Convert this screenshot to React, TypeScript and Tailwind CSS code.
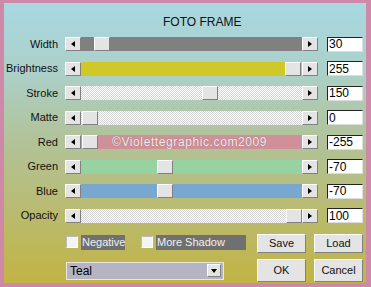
import React from "react";

type Row = {
  label: string;
  value: string;
  track: string;
  thumb: number | null;
  text?: string;
};

const dither =
  "bg-[repeating-conic-gradient(#ffffff_0_25%,#d4d4d4_0_50%)] bg-[length:2px_2px]";

const rows: Row[] = [
  { label: "Width", value: "30", track: "bg-[#808080]", thumb: 13 },
  { label: "Brightness", value: "255", track: "bg-[#d0c828]", thumb: 204 },
  { label: "Stroke", value: "150", track: dither, thumb: 121 },
  { label: "Matte", value: "0", track: dither, thumb: 1 },
  { label: "Red", value: "-255", track: "bg-[#d0909a]", thumb: 1, text: "©Violettegraphic.com2009" },
  { label: "Green", value: "-70", track: "bg-[#98d2a2]", thumb: 76 },
  { label: "Blue", value: "-70", track: "bg-[#78a8d0]", thumb: 76 },
  { label: "Opacity", value: "100", track: dither, thumb: 205 },
];

const bevel =
  "bg-[#e4e4e4] border border-t-white border-l-white border-r-[#808080] border-b-[#808080]";

function ArrowButton(props: { dir: "left" | "right" }) {
  return (
    <div className={`w-[16px] h-[14px] flex items-center justify-center ${bevel}`}>
      <div
        className={
          props.dir === "left"
            ? "w-0 h-0 border-y-[3px] border-y-transparent border-r-[4px] border-r-black"
            : "w-0 h-0 border-y-[3px] border-y-transparent border-l-[4px] border-l-black"
        }
      />
    </div>
  );
}

function SliderRow(props: { row: Row }) {
  const { row } = props;
  return (
    <div className="flex items-center h-[14px]">
      <div className="w-[54px] text-right text-[11px] leading-none text-[#111]">{row.label}</div>
      <div className="ml-[7px]">
        <ArrowButton dir="left" />
      </div>
      <div className={`relative w-[221px] h-[14px] ${row.track}`}>
        {row.text && (
          <div className="absolute left-[31px] top-0 h-[14px] flex items-center text-[12px] tracking-[0.6px] text-[#f6eef0] [text-shadow:0_0_1px_#8a5a60]">
            {row.text}
          </div>
        )}
        {row.thumb !== null && (
          <div
            className={`absolute top-0 w-[16px] h-[14px] ${bevel}`}
            style={{ left: row.thumb }}
          />
        )}
      </div>
      <ArrowButton dir="right" />
      <div className="ml-[9px] w-[36px] h-[15px] bg-white border border-t-[#222] border-l-[#222] border-r-[#ddd] border-b-[#ddd] text-[12px] leading-none pl-[1px] flex items-center text-black">
        {row.value}
      </div>
    </div>
  );
}

function Check(props: { label: string; width: number }) {
  return (
    <div className="flex items-center">
      <div className="w-[12px] h-[12px] bg-[#f4f4f0] border border-t-[#bbb] border-l-[#bbb] border-r-white border-b-white" />
      <div
        className="ml-[3px] h-[15px] bg-[#707070] text-[#f0f0f0] text-[11px] flex items-center pl-[1px]"
        style={{ width: props.width }}
      >
        {props.label}
      </div>
    </div>
  );
}

function Btn(props: { label: string; h: number }) {
  return (
    <div
      className={`w-[49px] flex items-center justify-center text-[11px] text-[#111] ${bevel}`}
      style={{ height: props.h }}
    >
      {props.label}
    </div>
  );
}

export default function App() {
  return (
    <div
      className="w-[371px] h-[287px] bg-[#d088a8] pt-[3px] pl-[4px] pr-[5px] pb-[4px]"
      style={{ fontFamily: '"Liberation Sans", Arial, sans-serif' }}
    >
      <div className="w-full h-full bg-[linear-gradient(to_bottom,#a8d8e2_0%,#acd0c8_25%,#b0c4a0_45%,#b8bc78_70%,#c2b444_100%)] flex flex-col">
        <div className="pt-[12px] pl-[159px] text-[12px] leading-[14px] text-[#111]">FOTO FRAME</div>
        <div className="mt-[8px] flex flex-col gap-[10.5px]">
          {rows.map((r) => (
            <SliderRow key={r.label} row={r} />
          ))}
        </div>
        <div className="mt-[11px] flex">
          <div className="ml-[62px] w-[191px] flex flex-col">
            <div className="flex items-center gap-[16px] mt-[1px]">
              <Check label="Negative" width={44} />
              <Check label="More Shadow" width={90} />
            </div>
            <div className="mt-[12px] w-[158px] h-[18px] bg-[#b4b4c4] border border-[#e8e8e0] flex items-center justify-between">
              <span className="pl-[3px] text-[12px] text-black">Teal</span>
              <div className={`mr-[2px] w-[14px] h-[13px] flex items-center justify-center ${bevel}`}>
                <div className="w-0 h-0 border-x-[3.5px] border-x-transparent border-t-[4px] border-t-black" />
              </div>
            </div>
          </div>
          <div className="flex flex-col gap-[6px]">
            <div className="flex gap-[8px]">
              <Btn label="Save" h={19} />
              <Btn label="Load" h={19} />
            </div>
            <div className="flex gap-[8px]">
              <Btn label="OK" h={23} />
              <Btn label="Cancel" h={23} />
            </div>
          </div>
        </div>
      </div>
    </div>
  );
}
